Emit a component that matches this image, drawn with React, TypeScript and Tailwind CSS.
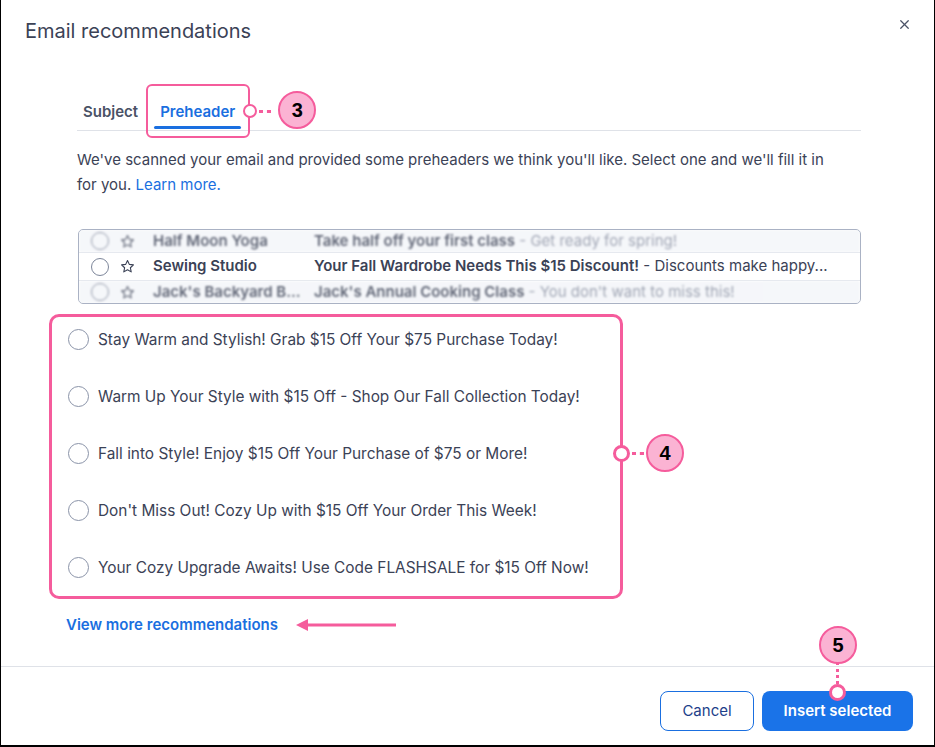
import { X } from "lucide-react";

const OPTIONS = [
  "Stay Warm and Stylish! Grab $15 Off Your $75 Purchase Today!",
  "Warm Up Your Style with $15 Off - Shop Our Fall Collection Today!",
  "Fall into Style! Enjoy $15 Off Your Purchase of $75 or More!",
  "Don't Miss Out! Cozy Up with $15 Off Your Order This Week!",
  "Your Cozy Upgrade Awaits! Use Code FLASHSALE for $15 Off Now!",
];

const EMAILS = [
  { from: "Half Moon Yoga", subject: "Take half off your first class", preview: "Get ready for spring!", blur: true },
  { from: "Sewing Studio", subject: "Your Fall Wardrobe Needs This $15 Discount!", preview: "Discounts make happy...", blur: false },
  { from: "Jack's Backyard B...", subject: "Jack's Annual Cooking Class", preview: "You don't want to miss this!", blur: true },
];

function Badge({ n }: { n: string }) {
  return (
    <div className="w-[38px] h-[38px] rounded-full bg-[#fbb3d3] border-2 border-[#f55c9c] flex items-center justify-center text-[20px] font-bold text-black font-['Liberation_Sans',sans-serif]">
      {n}
    </div>
  );
}

function Star({ className }: { className?: string }) {
  return (
    <svg width="15" height="15" viewBox="0 0 24 24" fill="none" stroke="currentColor" strokeWidth="1.8" strokeLinejoin="round" className={className}>
      <path d="M12 2.5l2.9 6.1 6.6.8-4.9 4.6 1.3 6.6L12 17.3l-5.9 3.3 1.3-6.6-4.9-4.6 6.6-.8z" />
    </svg>
  );
}

export default function App() {
  return (
    <div className="relative w-[935px] h-[747px] bg-white border-l border-r border-b-2 border-black flex flex-col font-['Inter',sans-serif] text-[#3b4256]">
      {/* header */}
      <header className="px-6 pt-[18px] h-[48px]">
        <h1 className="text-[20px] leading-[26px] text-[#3b4256]">Email recommendations</h1>
      </header>
      <button className="absolute right-[22px] top-[17px] text-[#4a5266]">
        <X size={15} strokeWidth={2} />
      </button>

      {/* tabs */}
      <div className="ml-[76px] mr-[73px] mt-[46px] flex border-b border-[#dfe2e8]">
        <div className="px-[6px] h-[36px] flex items-center text-[15px] font-semibold text-[#4a5266]">Subject</div>
        <div className="relative ml-[8px] px-2 h-[36px] flex items-center text-[15px] font-semibold text-[#1a6fe0]">
          Preheader
          <div className="absolute left-[2px] right-[2px] bottom-[1px] h-[3px] bg-[#1a6fe0] rounded" />
          <div className="absolute -left-[6px] -right-[7px] -top-[10px] bottom-[-8px] border-2 border-[#f55c9c] rounded-[6px]" />
          <div className="absolute -right-[14px] top-[10px] w-[14px] h-[14px] rounded-full bg-white border-2 border-[#f55c9c]" />
          <div className="absolute -right-[28px] top-[16px] w-[12px] border-t-[3px] border-dotted border-[#f55c9c]" />
          <div className="absolute -right-[73px] -top-[3px]">
            <Badge n="3" />
          </div>
        </div>
      </div>

      {/* description */}
      <p className="ml-[76px] mr-[95px] mt-[16px] text-[15px] leading-[25px]">
        We've scanned your email and provided some preheaders we think you'll like. Select one and we'll fill it in for you.{" "}
        <span className="text-[#1a6fe0]">Learn more.</span>
      </p>

      {/* email preview */}
      <div className="ml-[77px] mr-[73px] mt-[32px] h-[75px] border border-[#aab2c4] rounded-[5px] overflow-hidden flex flex-col text-[15px]">
        {EMAILS.map((e, i) => (
          <div
            key={i}
            className={
              e.blur
                ? "flex items-center h-[22px] bg-[#f3f5f9] blur-[1.2px] opacity-80"
                : "flex items-center h-[31px] bg-white border-y border-[#e3e6ec]"
            }
          >
            <div className="w-[18px] h-[18px] ml-[12px] rounded-full border-[1.5px] border-[#7d869a]" />
            <Star className="ml-[11px] text-[#3b4256]" />
            <span className="ml-[18px] w-[161px] font-semibold truncate">{e.from}</span>
            <span className="truncate">
              <span className="font-semibold">{e.subject}</span>
              <span className={e.blur ? "text-[#8a91a3]" : ""}> - {e.preview}</span>
            </span>
          </div>
        ))}
      </div>

      {/* options */}
      <div className="relative ml-[48px] mt-[10px] w-[574px] h-[285px] border-[3px] border-[#f55c9c] rounded-[10px] flex flex-col gap-[36px] pt-[12px] pl-[16px]">
        {OPTIONS.map((o) => (
          <label key={o} className="flex items-center h-[21px] gap-[9px] text-[15.4px] text-[#3b4256]">
            <span className="w-[21px] h-[21px] rounded-full border-[1.5px] border-[#8a93a8] shrink-0" />
            {o}
          </label>
        ))}
        <div className="absolute -right-[10px] top-[128px] w-[17px] h-[17px] rounded-full bg-white border-[3px] border-[#f55c9c]" />
        <div className="absolute -right-[24px] top-[135px] w-[12px] border-t-[3px] border-dotted border-[#f55c9c]" />
        <div className="absolute -right-[64px] top-[117px]">
          <Badge n="4" />
        </div>
      </div>

      {/* view more */}
      <div className="ml-[65px] mt-[15px] flex items-center">
        <span className="text-[15px] font-semibold text-[#1a6fe0]">View more recommendations</span>
        <svg width="100" height="14" viewBox="0 0 100 14" className="ml-[18px]">
          <path d="M0 7 L12 1 L12 13 Z" fill="#f55c9c" />
          <rect x="10" y="5.5" width="90" height="3" fill="#f55c9c" />
        </svg>
      </div>

      {/* footer */}
      <div className="mt-auto border-t border-[#dfe2e8] h-[79px] flex items-start justify-end gap-2 pr-[21px] pt-[24px]">
        <button className="w-[94px] h-[40px] rounded-[8px] border border-[#1a6fe0] text-[15px] text-[#1d3f8a]">Cancel</button>
        <div className="relative">
          <button className="w-[151px] h-[40px] rounded-[8px] bg-[#1a73e8] text-[15px] font-semibold text-white">Insert selected</button>
          <div className="absolute left-[67px] -top-[7px] w-[17px] h-[17px] rounded-full bg-white border-[3px] border-[#f55c9c]" />
          <div className="absolute left-[74px] -top-[29px] h-[22px] border-l-[3px] border-dotted border-[#f55c9c]" />
          <div className="absolute left-[57px] -top-[65px]">
            <Badge n="5" />
          </div>
        </div>
      </div>
    </div>
  );
}
